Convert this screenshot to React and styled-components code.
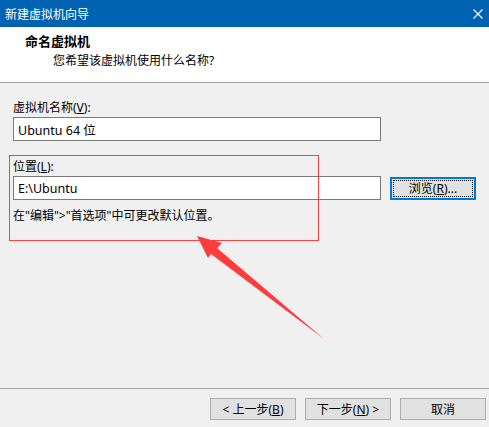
import React from 'react';
import styled, { createGlobalStyle } from 'styled-components';

const GlobalStyle = createGlobalStyle`
  html, body {
    margin: 0;
    padding: 0;
    background: #f0f0f0;
  }
  body {
    font-family: "Noto Sans", "Noto Sans CJK SC", sans-serif;
    font-size: 12px;
    color: #000;
  }
`;

const Window = styled.div`
  position: relative;
  width: 489px;
  height: 427px;
  display: flex;
  flex-direction: column;
  background: #f0f0f0;
  overflow: hidden;
`;

const TitleBar = styled.div`
  height: 27px;
  flex: none;
  display: flex;
  align-items: center;
  justify-content: space-between;
  padding: 0 6px 0 5px;
  background: #0063b1;
  color: #fff;
  font-size: 12px;
`;

const CloseIcon = () => (
  <svg width="10" height="10" viewBox="0 0 10 10">
    <path d="M0.5 0.5 L9.5 9.5 M9.5 0.5 L0.5 9.5" stroke="#fff" strokeWidth="1.1" />
  </svg>
);

const Header = styled.div`
  height: 56px;
  flex: none;
  background: #fff;
  border-bottom: 1px solid #a0a0a0;
  box-sizing: border-box;
  padding: 6px 0 0 25px;
`;

const HeaderTitle = styled.div`
  font-weight: bold;
  font-size: 13px;
  line-height: 17px;
`;

const HeaderSub = styled.div`
  margin-left: 28px;
  margin-top: 3px;
  line-height: 16px;
`;

const Body = styled.div`
  flex: 1;
  padding: 17px 0 0 13px;
  display: flex;
  flex-direction: column;
`;

const Label = styled.div`
  line-height: 16px;
  margin-bottom: ${p => p.$gap || 1}px;
`;

const Row = styled.div`
  display: flex;
  align-items: center;
  gap: 9px;
`;

const TextBox = styled.div`
  width: 368px;
  height: 24px;
  box-sizing: border-box;
  border: 1px solid #7a7a7a;
  background: #fff;
  padding: 0 4px;
  display: flex;
  align-items: center;
  font-size: 12.5px;
`;

const Button = styled.button`
  width: ${p => p.$w || 86}px;
  height: ${p => p.$h || 22}px;
  box-sizing: border-box;
  background: #e1e1e1;
  border: ${p => (p.$focused ? '2px solid #0078d7' : '1px solid #adadad')};
  font-family: inherit;
  font-size: 12px;
  color: #000;
  padding: 0;
  display: flex;
  align-items: center;
  justify-content: center;
  position: relative;

  ${p => p.$focused && `
    &::after {
      content: '';
      position: absolute;
      inset: 1px;
      border: 1px dotted #000;
    }
  `}
`;

const Hint = styled.div`
  margin-top: 8px;
  line-height: 16px;
`;

const Footer = styled.div`
  flex: none;
  border-top: 1px solid #a0a0a0;
  margin-top: auto;
  height: 39px;
  box-sizing: border-box;
  display: flex;
  justify-content: flex-end;
  align-items: flex-start;
  padding: 9px 3px 0 0;
  gap: 9px;
`;

const U = styled.span`
  text-decoration: underline;
`;

const Annotation = styled.svg`
  position: absolute;
  left: 0;
  top: 0;
  pointer-events: none;
`;

export default function App() {
  return (
    <>
      <GlobalStyle />
      <Window>
        <TitleBar>
          <span>新建虚拟机向导</span>
          <CloseIcon />
        </TitleBar>
        <Header>
          <HeaderTitle>命名虚拟机</HeaderTitle>
          <HeaderSub>您希望该虚拟机使用什么名称?</HeaderSub>
        </Header>
        <Body>
          <Label>虚拟机名称(<U>V</U>):</Label>
          <TextBox>Ubuntu 64 位</TextBox>
          <Label style={{ marginTop: 18 }}>位置(<U>L</U>):</Label>
          <Row>
            <TextBox>E:\Ubuntu</TextBox>
            <Button $focused $w={86} $h={23}>浏览(<U>R</U>)...</Button>
          </Row>
          <Hint>在"编辑"&gt;"首选项"中可更改默认位置。</Hint>
        </Body>
        <Footer>
          <Button>&lt; 上一步(<U>B</U>)</Button>
          <Button>下一步(<U>N</U>) &gt;</Button>
          <Button>取消</Button>
        </Footer>
        <Annotation width="489" height="427" viewBox="0 0 489 427">
          <rect x="9.5" y="155.5" width="309" height="85" fill="none" stroke="#ff4040" strokeWidth="1" />
          <polygon
            points="197,236 222,243 217,248 324,339 211,254 208,258"
            fill="#ff3c3c"
          />
        </Annotation>
      </Window>
    </>
  );
}
